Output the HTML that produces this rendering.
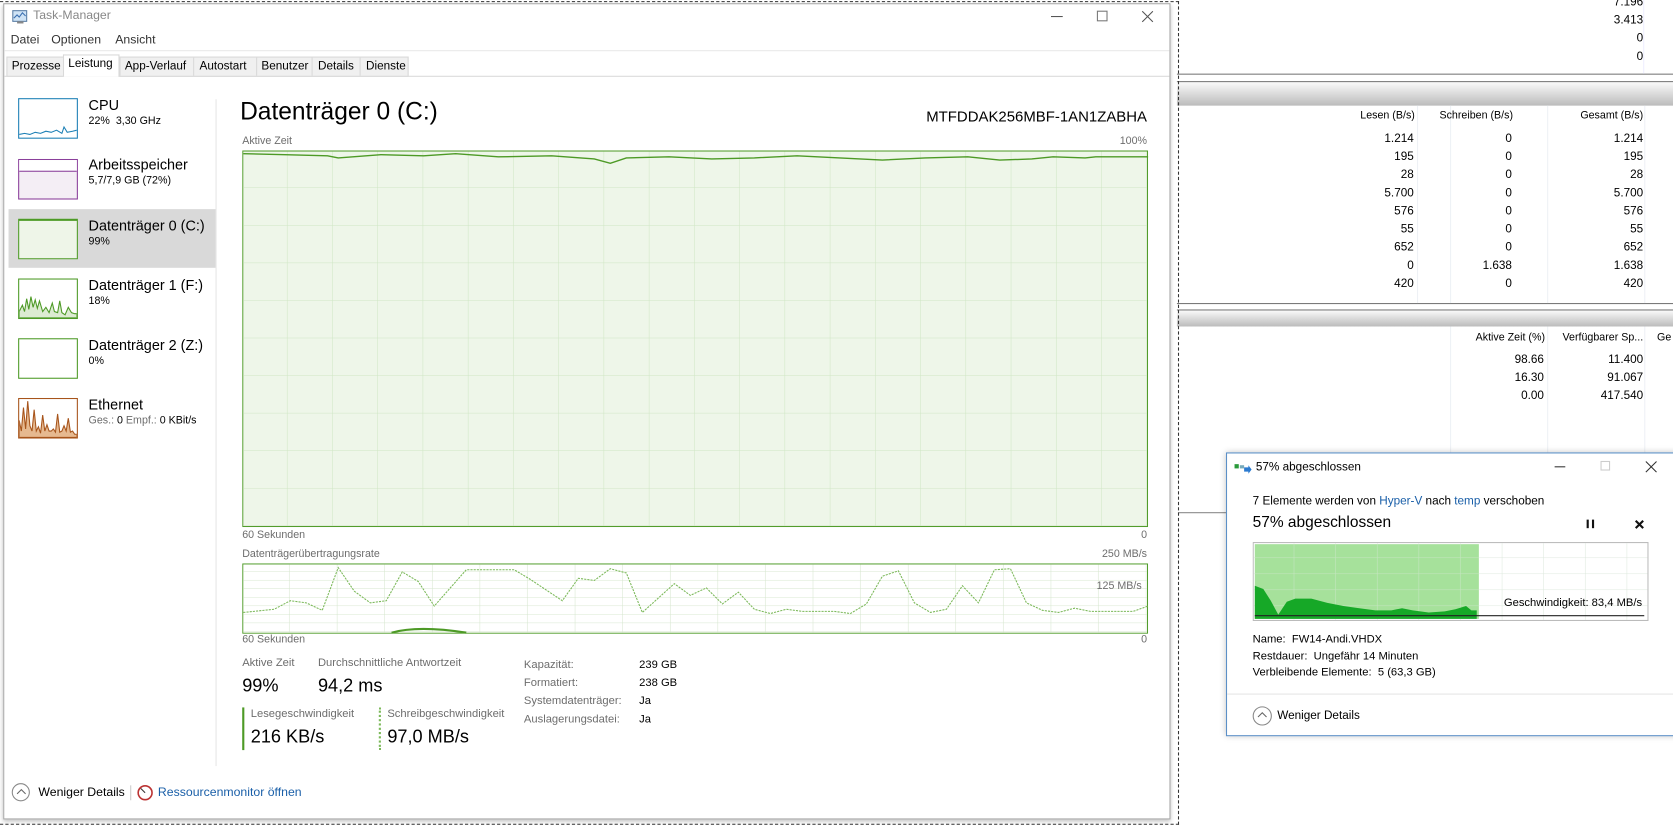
<!DOCTYPE html>
<html><head><meta charset="utf-8"><style>
*{margin:0;padding:0;box-sizing:border-box}
html,body{width:1673px;height:837px;overflow:hidden;background:#fff}
#s{position:absolute;left:0;top:0;width:1568px;height:784px;transform:scale(1.067);transform-origin:0 0;font-family:"Liberation Sans",sans-serif;color:#000}
.a{position:absolute;white-space:nowrap}
.g{color:#6d6d6d}
.t{font-size:11.5px}
.sm{font-size:10px}
.r{text-align:right}
.th{position:absolute;width:56px;height:38px;border:1px solid}
</style></head><body><div id="s">

<!-- right background -->
<div class="a" style="left:1103px;top:69px;width:465px;height:1px;background:#777"></div>
<div class="a" style="left:1103px;top:76px;width:465px;height:23px;background:linear-gradient(#fafafa,#bbb);border-top:1px solid #777"></div>
<div class="a" style="left:1103px;top:284px;width:465px;height:1px;background:#777"></div>
<div class="a" style="left:1103px;top:290px;width:465px;height:16px;background:linear-gradient(#fafafa,#bbb);border-top:1px solid #777"></div>
<div class="a" style="left:1540px;top:0;width:1px;height:69px;background:#eef"></div>
<div class="a" style="left:1328px;top:99px;width:1px;height:185px;background:#eef1f5"></div>
<div class="a" style="left:1359px;top:99px;width:1px;height:185px;background:#eef1f5"></div>
<div class="a" style="left:1450px;top:99px;width:1px;height:185px;background:#eef1f5"></div>
<div class="a" style="left:1541px;top:99px;width:1px;height:185px;background:#eef1f5"></div>
<div class="a" style="left:1359px;top:306px;width:1px;height:120px;background:#eef1f5"></div>
<div class="a" style="left:1450px;top:306px;width:1px;height:120px;background:#eef1f5"></div>
<div class="a" style="left:1541px;top:306px;width:1px;height:120px;background:#eef1f5"></div>
<div class="a" style="left:1440px;top:0;width:100px;height:62px;overflow:hidden"><div class="r" style="margin-top:-6px;line-height:17px;font-size:11px">7.196<br>3.413<br>0<br>0<br>3.276</div></div>
<div class="a r" style="left:1240px;top:103px;width:86px;font-size:10px">Lesen (B/s)</div>
<div class="a r" style="left:1330px;top:103px;width:88px;font-size:10px">Schreiben (B/s)</div>
<div class="a r" style="left:1440px;top:103px;width:100px;font-size:10px">Gesamt (B/s)</div>
<div class="a" style="left:1250px;top:122px;width:300px;height:150px;overflow:hidden">
<div class="a r" style="left:0;top:0;width:75px;line-height:17px;font-size:11px">1.214<br>195<br>28<br>5.700<br>576<br>55<br>652<br>0<br>420<br>835</div>
<div class="a r" style="left:90px;top:0;width:77px;line-height:17px;font-size:11px">0<br>0<br>0<br>0<br>0<br>0<br>0<br>1.638<br>0<br>0</div>
<div class="a r" style="left:190px;top:0;width:100px;line-height:17px;font-size:11px">1.214<br>195<br>28<br>5.700<br>576<br>55<br>652<br>1.638<br>420<br>835</div>
</div>
<div class="a r" style="left:1340px;top:311px;width:108px;font-size:10px">Aktive Zeit (%)</div>
<div class="a r" style="left:1440px;top:311px;width:100px;font-size:10px">Verfügbarer Sp...</div>
<div class="a" style="left:1553px;top:311px;font-size:10px">Ge</div>
<div class="a r" style="left:1340px;top:329px;width:107px;line-height:17px;font-size:11px">98.66<br>16.30<br>0.00</div>
<div class="a r" style="left:1440px;top:329px;width:100px;line-height:17px;font-size:11px">11.400<br>91.067<br>417.540</div>
<div class="a" style="left:1104px;top:480px;width:45px;height:1px;background:#888"></div>

<!-- selection dashes -->
<div class="a" style="left:0;top:1px;width:1105px;border-top:1px dashed #333"></div>
<div class="a" style="left:0;top:772px;width:1105px;border-top:1px dashed #333"></div>
<div class="a" style="left:1104px;top:1px;height:772px;border-left:1px dashed #333"></div>

<!-- Task manager -->
<div class="a" style="left:3px;top:3px;width:1094px;height:765px;background:#fff;border:1px solid #aaa;box-shadow:0 2px 4px rgba(0,0,0,.25)"></div>
<svg class="a" style="left:11px;top:9px" width="16" height="14"><rect x="1" y="1" width="13" height="10" fill="#cfe3f5" stroke="#5a7ea6"/><polyline points="2,8 5,5 7,7 10,3 13,6" fill="none" stroke="#3b6fb0"/><rect x="5" y="11" width="6" height="2" fill="#888"/></svg>
<div class="a t g" style="left:31px;top:9px;color:#888">Task-Manager</div>
<div class="a" style="left:985px;top:15px;width:11px;height:1px;background:#555"></div>
<div class="a" style="left:1028px;top:10px;width:10px;height:10px;border:1px solid #777"></div>
<svg class="a" style="left:1070px;top:10px" width="11" height="11"><path d="M0.5 0.5L10.5 10.5M10.5 0.5L0.5 10.5" stroke="#555"/></svg>
<div class="a t" style="left:10px;top:32px;color:#333">Datei</div>
<div class="a t" style="left:48px;top:32px;color:#333">Optionen</div>
<div class="a t" style="left:108px;top:32px;color:#333">Ansicht</div>
<div class="a" style="left:4px;top:47px;width:1092px;height:1px;background:#e8e8e8"></div>
<div class="a" style="left:4px;top:71px;width:1092px;height:1px;background:#d9d9d9"></div>
<div class="a" style="left:6px;top:53px;width:377px;height:19px;background:#f0f0f0;border:1px solid #d9d9d9"></div>
<div class="a" style="left:59px;top:51px;width:53px;height:21px;background:#fff;border:1px solid #d9d9d9;border-bottom:none"></div>
<div class="a" style="left:11px;top:56px;font-size:11px">Prozesse</div>
<div class="a" style="left:64px;top:54px;font-size:11px">Leistung</div>
<div class="a" style="left:112px;top:54px;height:17px;border-left:1px solid #d9d9d9"></div>
<div class="a" style="left:117px;top:56px;font-size:11px">App-Verlauf</div>
<div class="a" style="left:181px;top:54px;height:17px;border-left:1px solid #d9d9d9"></div>
<div class="a" style="left:187px;top:56px;font-size:11px">Autostart</div>
<div class="a" style="left:240px;top:54px;height:17px;border-left:1px solid #d9d9d9"></div>
<div class="a" style="left:245px;top:56px;font-size:11px">Benutzer</div>
<div class="a" style="left:292px;top:54px;height:17px;border-left:1px solid #d9d9d9"></div>
<div class="a" style="left:298px;top:56px;font-size:11px">Details</div>
<div class="a" style="left:337px;top:54px;height:17px;border-left:1px solid #d9d9d9"></div>
<div class="a" style="left:343px;top:56px;font-size:11px">Dienste</div>

<!-- sidebar -->
<div class="a" style="left:8px;top:196px;width:194px;height:55px;background:#d9d9d9"></div>
<div class="a" style="left:202px;top:93px;width:1px;height:625px;background:#e6e6e6"></div>
<div class="th" style="left:17px;top:92px;border-color:#1b7fb5;background:#fff"><svg width="54" height="36"><polyline points="0,33 5,32 10,33 15,31 20,32 25,30 30,31 35,29 40,32 42,26 45,31 50,30 54,29" fill="none" stroke="#1b7fb5"/></svg></div>
<div class="th" style="left:17px;top:149px;border-color:#8b3f9b;background:#f4eef5"><div style="height:11px;border-bottom:1px solid #8b3f9b;background:#fff"></div></div>
<div class="th" style="left:17px;top:205px;border-color:#4d9a26;background:#eef5e8;border-top-width:2px"></div>
<div class="th" style="left:17px;top:261px;border-color:#4d9a26;background:#fff"><svg width="54" height="36"><polygon points="0,35 0,30 3,24 5,30 7,18 9,28 11,16 13,26 15,19 17,27 19,20 22,30 25,26 28,31 31,22 33,30 36,31 38,20 40,31 43,33 46,26 49,31 52,32 54,32 54,36 0,36" fill="#dcebd2" stroke="#4d9a26"/></svg></div>
<div class="th" style="left:17px;top:317px;border-color:#4d9a26;background:#fff"></div>
<div class="th" style="left:17px;top:373px;border-color:#a7541b;background:#fff"><svg width="54" height="36"><polygon points="0,36 0,20 2,30 4,8 6,28 8,2 10,25 12,30 14,10 16,30 18,26 20,32 22,15 24,30 26,24 28,30 30,30 32,28 34,31 36,14 38,31 40,30 42,25 44,30 46,18 48,31 50,30 52,33 54,33 54,36" fill="#e6b990" stroke="#a7541b"/></svg></div>
<div class="a" style="left:83px;top:91px;font-size:13.5px">CPU</div>
<div class="a sm" style="left:83px;top:108px">22%&nbsp; 3,30 GHz</div>
<div class="a" style="left:83px;top:147px;font-size:13.5px">Arbeitsspeicher</div>
<div class="a sm" style="left:83px;top:164px">5,7/7,9 GB (72%)</div>
<div class="a" style="left:83px;top:204px;font-size:13.5px">Datenträger 0 (C:)</div>
<div class="a sm" style="left:83px;top:221px">99%</div>
<div class="a" style="left:83px;top:260px;font-size:13.5px">Datenträger 1 (F:)</div>
<div class="a sm" style="left:83px;top:277px">18%</div>
<div class="a" style="left:83px;top:316px;font-size:13.5px">Datenträger 2 (Z:)</div>
<div class="a sm" style="left:83px;top:333px">0%</div>
<div class="a" style="left:83px;top:372px;font-size:13.5px">Ethernet</div>
<div class="a sm g" style="left:83px;top:389px">Ges.: <span style="color:#000">0</span> Empf.: <span style="color:#000">0 KBit/s</span></div>

<!-- main -->
<div class="a" style="left:225px;top:91px;font-size:23px">Datenträger 0 (C:)</div>
<div class="a r" style="left:800px;top:101px;width:275px;font-size:14px">MTFDDAK256MBF-1AN1ZABHA</div>
<div class="a sm g" style="left:227px;top:127px">Aktive Zeit</div>
<div class="a sm g r" style="left:1000px;top:127px;width:75px">100%</div>
<svg class="a" style="left:227px;top:141px" width="849" height="353">
<defs><pattern id="gp" width="42.4" height="35.2" patternUnits="userSpaceOnUse"><path d="M42.4 0V35.2M0 35.2H42.4" fill="none" stroke="#cfe6c4" stroke-width="1"/></pattern></defs>
<rect x="0.5" y="0.5" width="848" height="352" fill="#eef6e9" stroke="#4d9a26"/>
<rect x="1" y="1" width="847" height="351" fill="url(#gp)"/>
<polyline points="1,3 40,4 80,5 90,7 130,4 170,5 200,3 240,6 290,5 330,8 345,12 360,7 400,6 440,8 480,7 520,5 560,7 600,9 640,7 680,6 710,9 740,8 760,6 790,7 800,6 850,6" fill="none" stroke="#4d9a26" stroke-width="1.3"/>
</svg>
<div class="a sm g" style="left:227px;top:496px">60 Sekunden</div>
<div class="a sm g r" style="left:1000px;top:496px;width:75px">0</div>
<div class="a sm g" style="left:227px;top:514px">Datenträgerübertragungsrate</div>
<div class="a sm g r" style="left:1000px;top:514px;width:75px">250 MB/s</div>
<svg class="a" style="left:227px;top:528px" width="849" height="66">
<defs><pattern id="gp2" width="44.6" height="8" patternUnits="userSpaceOnUse"><path d="M44.6 0V8M0 8H44.6" fill="none" stroke="#d6e6ce" stroke-width="1"/></pattern></defs>
<rect x="0.5" y="0.5" width="848" height="65" fill="#fff" stroke="#4d9a26"/>
<rect x="1" y="1" width="847" height="64" fill="url(#gp2)"/>
<polyline points="1,46 30,43 45,35 60,37 75,44 90,4 105,26 120,37 135,35 150,8 165,17 180,40 210,6 255,6 270,15 300,35 315,14 330,16 345,5 360,9 375,46 405,19 420,30 435,23 450,38 465,27 480,43 495,47 510,43 525,45 555,45 570,47 585,38 600,12 615,7 630,37 645,46 660,43 675,21 690,37 705,6 720,5 735,37 750,44 765,46 780,42 795,45 835,45 849,40" fill="none" stroke="#7cb95a" stroke-width="1" stroke-dasharray="2,1"/>
<path d="M140,65 Q165,58 210,65" fill="none" stroke="#4d9a26" stroke-width="2"/>
</svg>
<div class="a sm g r" style="left:990px;top:544px;width:80px">125 MB/s</div>
<div class="a sm g" style="left:227px;top:594px">60 Sekunden</div>
<div class="a sm g r" style="left:1000px;top:594px;width:75px">0</div>
<div class="a g" style="left:227px;top:615px;font-size:10.5px">Aktive Zeit</div>
<div class="a" style="left:227px;top:633px;font-size:17px">99%</div>
<div class="a g" style="left:298px;top:615px;font-size:10.5px">Durchschnittliche Antwortzeit</div>
<div class="a" style="left:298px;top:633px;font-size:17px">94,2 ms</div>
<div class="a" style="left:227px;top:663px;width:2px;height:40px;background:#4d9a26"></div>
<div class="a" style="left:355px;top:663px;height:40px;border-left:2px dotted #7cb95a"></div>
<div class="a g" style="left:235px;top:663px;font-size:10.5px">Lesegeschwindigkeit</div>
<div class="a" style="left:235px;top:681px;font-size:17px">216 KB/s</div>
<div class="a g" style="left:363px;top:663px;font-size:10.5px">Schreibgeschwindigkeit</div>
<div class="a" style="left:363px;top:681px;font-size:17px">97,0 MB/s</div>
<div class="a g" style="left:491px;top:615px;font-size:10.5px;line-height:17px">Kapazität:<br>Formatiert:<br>Systemdatenträger:<br>Auslagerungsdatei:</div>
<div class="a" style="left:599px;top:615px;font-size:10.5px;line-height:17px">239 GB<br>238 GB<br>Ja<br>Ja</div>
<div class="a" style="left:11px;top:734px;width:17px;height:17px;border:1px solid #888;border-radius:50%"></div>
<svg class="a" style="left:14px;top:738px" width="12" height="8"><polyline points="2,6 6,2 10,6" fill="none" stroke="#666"/></svg>
<div class="a t" style="left:36px;top:737px">Weniger Details</div>
<div class="a" style="left:122px;top:736px;width:1px;height:14px;background:#ccc"></div>
<svg class="a" style="left:128px;top:735px" width="16" height="16"><circle cx="8" cy="8" r="6.5" fill="#fff" stroke="#b33" stroke-width="1.5"/><line x1="8" y1="8" x2="4" y2="4" stroke="#333"/></svg>
<div class="a t" style="left:148px;top:737px;color:#1a5fa8">Ressourcenmonitor öffnen</div>

<!-- copy dialog -->
<div class="a" style="left:1149px;top:424px;width:430px;height:266px;background:#fff;border:1px solid #5b8fc7;box-shadow:0 0 6px rgba(0,0,0,.25)"></div>
<svg class="a" style="left:1157px;top:433px" width="16" height="12"><rect x="0" y="2" width="4" height="4" fill="#2a9a3a"/><rect x="5" y="3" width="4" height="3" fill="#7ab"/><path d="M9 5h4v-2l3 4-3 4v-2h-4z" fill="#2a7ad0"/></svg>
<div class="a" style="left:1177px;top:432px;font-size:11px">57% abgeschlossen</div>
<div class="a" style="left:1457px;top:437px;width:10px;height:1px;background:#333"></div>
<div class="a" style="left:1500px;top:432px;width:9px;height:9px;border:1px solid #ccc"></div>
<svg class="a" style="left:1542px;top:432px" width="11" height="11"><path d="M0.5 0.5L10.5 10.5M10.5 0.5L0.5 10.5" stroke="#333"/></svg>
<div class="a" style="left:1174px;top:464px;font-size:11px">7 Elemente werden von <span style="color:#1a5fa8">Hyper-V</span> nach <span style="color:#1a5fa8">temp</span> verschoben</div>
<div class="a" style="left:1174px;top:482px;font-size:14.5px">57% abgeschlossen</div>
<div class="a" style="left:1487px;top:487px;width:2px;height:8px;background:#111"></div>
<div class="a" style="left:1492px;top:487px;width:2px;height:8px;background:#111"></div>
<svg class="a" style="left:1532px;top:487px" width="9" height="9"><path d="M1 1L8 8M8 1L1 8" stroke="#111" stroke-width="2"/></svg>
<svg class="a" style="left:1174px;top:508px" width="371" height="74">
<defs><pattern id="gp3" width="39" height="15" patternUnits="userSpaceOnUse"><path d="M39 0V15M0 15H39" fill="none" stroke="#dde8dd"/></pattern></defs>
<rect x="0.5" y="0.5" width="370" height="73" fill="#fff" stroke="#bbb"/>
<rect x="1" y="1" width="369" height="72" fill="url(#gp3)"/>
<rect x="2" y="2" width="210" height="70" fill="#a6e19b"/>
<rect x="2" y="2" width="210" height="70" fill="url(#gp3)" opacity=".6"/>
<polygon points="2,72 2,41 10,44 17,55 24,68 32,56 40,53 55,53 70,57 85,60 100,62 115,64 130,64 140,62 150,64 165,66 180,65 190,63 200,60 205,64 210,64 210,72" fill="#16a827"/>
<line x1="2" y1="69" x2="367" y2="69" stroke="#222"/>
</svg>
<div class="a r" style="left:1380px;top:559px;width:159px;font-size:10.5px">Geschwindigkeit: 83,4 MB/s</div>
<div class="a" style="left:1174px;top:592px;font-size:10.5px;line-height:15.5px">Name:&nbsp; FW14-Andi.VHDX<br>Restdauer:&nbsp; Ungefähr 14 Minuten<br>Verbleibende Elemente:&nbsp; 5 (63,3 GB)</div>
<div class="a" style="left:1150px;top:650px;width:418px;height:1px;background:#e5e5e5"></div>
<div class="a" style="left:1174px;top:662px;width:18px;height:18px;border:1px solid #888;border-radius:50%"></div>
<svg class="a" style="left:1177px;top:666px" width="12" height="8"><polyline points="2,6 6,2 10,6" fill="none" stroke="#666"/></svg>
<div class="a" style="left:1197px;top:665px;font-size:11px">Weniger Details</div>
</div></body></html>
